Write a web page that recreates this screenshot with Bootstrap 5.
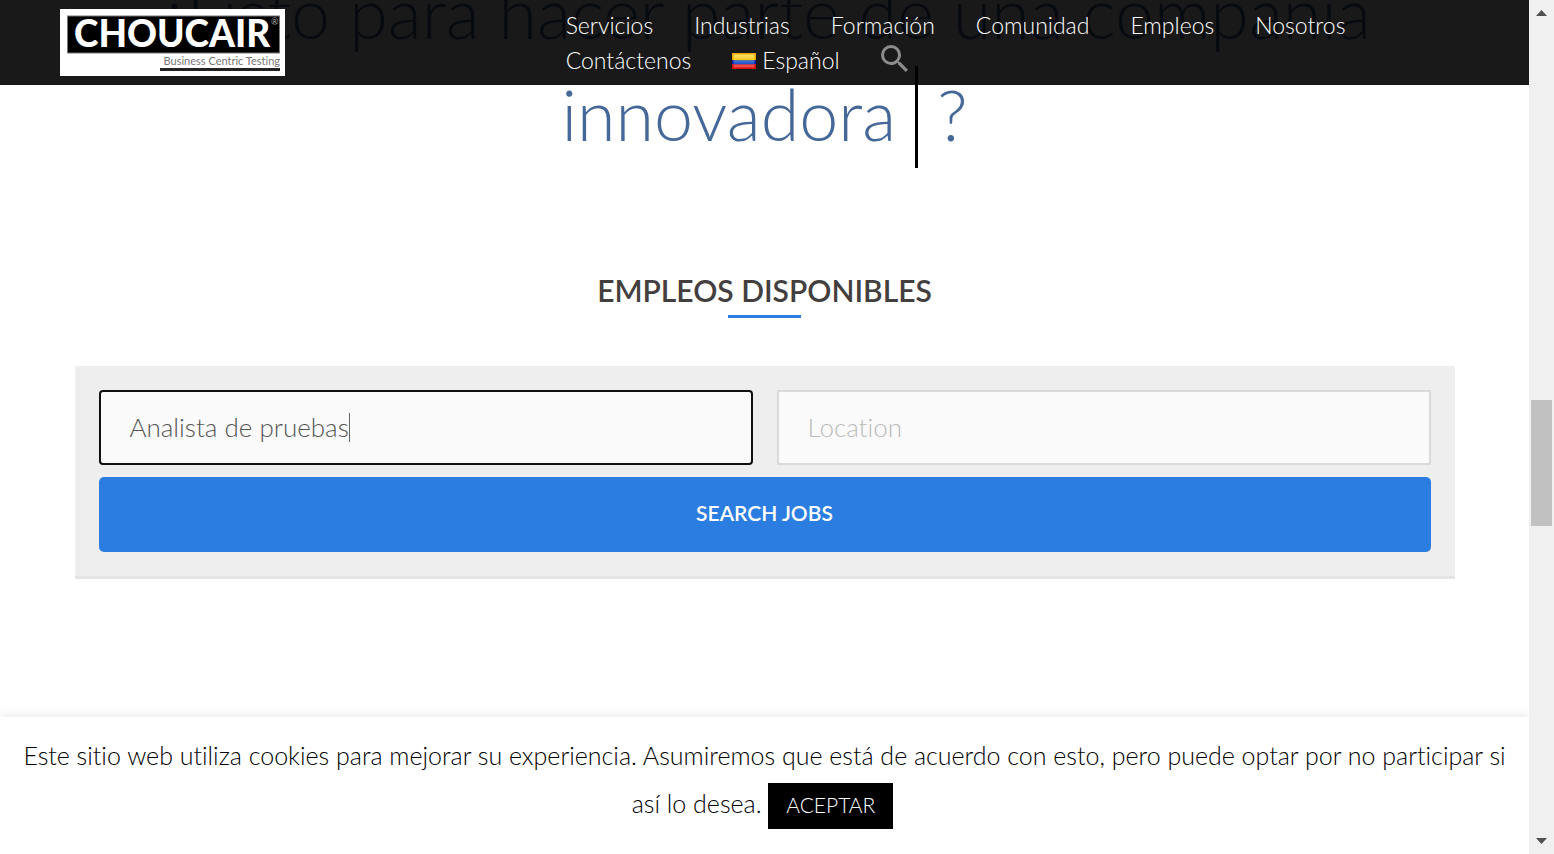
<!DOCTYPE html>
<html lang="es">
<head>
<meta charset="utf-8">
<meta name="viewport" content="width=device-width, initial-scale=1">
<title>Choucair - Empleos</title>
<link href="https://cdn.jsdelivr.net/npm/bootstrap@5.3.0/dist/css/bootstrap.min.css" rel="stylesheet">
<style>
body { font-family: Lato, sans-serif; background: #fff; color: #000; font-variant-ligatures: none; }
input { font-variant-ligatures: none; }
.site-header { background: rgba(0,0,0,.9); z-index: 10; padding: 8px 60px 7px; }
.logo-box { width: 225px; height: 67px; margin-top: 1px; }
.site-menu { font-size: 23px; font-weight: 300; line-height: 35px; padding-left: 36px; column-gap: 41px; }
.site-menu a { color: #fff; text-decoration: none; }
.site-menu .search-toggle { line-height: 0; padding-top: 2px; }
.lang-flag { margin-right: 6px; }
.page-body { max-width: 1380px; }
.hero-title { font-size: 70px; line-height: 102px; font-weight: 300; color: #456899; margin: -39px 0 0; }
.typed-cursor { display: inline-block; width: 3px; height: 102px; background: #000; vertical-align: -27px; }
.section-title { font-size: 30px; line-height: 36px; font-weight: 600; color: #443f3f; margin: 104px 0 0; }
.title-rule { width: 73px; height: 3px; background: #2c7de1; margin-top: 7px; }
.job-search { background: #eee; border-bottom: 3px solid #e4e4e4; padding: 24px; margin-top: 48px; row-gap: 12px; column-gap: 24px; }
.job-field { height: 75px; font-size: 26px; font-weight: 300; border: 2px solid #dadada; border-radius: 0; background: #fafafa; padding: 0 29px 2px; color: #555; }
.job-field::placeholder { color: #bbb; }
.job-field.active-field { border-color: #101010; border-radius: 4px; }
.text-caret { position: absolute; left: 250px; top: 23px; width: 1px; height: 29px; background: #666; }
.job-submit { height: 75px; font-size: 21px; font-weight: 600; color: #fff; background: #2c7de1; border: 0; border-radius: 5px; padding-bottom: 4px; }
.cookie-bar { z-index: 10; background: #fff; font-size: 25px; font-weight: 300; line-height: 48px; padding: 14px 18px 25px; box-shadow: 0 -1px 10px rgba(172,171,171,.3); }
.cookie-accept { height: 46px; width: 125px; font-size: 21px; line-height: 44px; font-weight: 300; color: #fff; background: #000; border: 0; padding: 0 0 2px; vertical-align: top; margin: 4px 4px 0 0; }
.scroll-track { width: 25px; background: #f0f0f0; }
.scroll-thumb { width: 21px; height: 126px; background: #c1c1c1; }
</style>
</head>
<body>
<div class="d-flex vh-100 overflow-hidden">
  <div class="flex-grow-1 position-relative overflow-hidden">
    <header class="site-header position-absolute top-0 start-0 w-100">
      <div class="row g-0">
        <div class="col-4">
          <a href="#" class="d-block logo-box" aria-label="Choucair">
            <svg class="d-block" width="225" height="67" viewBox="0 0 225 67">
              <rect width="225" height="67" fill="#fff"/>
              <rect x="7.500" y="7" width="212" height="37" fill="#000" stroke="#777"/>
              <text x="14" y="38" font-family="Lato" font-weight="900" font-size="37" fill="#fff">CHOUCAIR</text>
              <text x="211" y="16" font-family="Lato" font-size="9" fill="#aaa">®</text>
              <text x="220" y="56" text-anchor="end" font-family="Lato" font-size="11" fill="#777">Business Centric Testing</text>
              <rect x="100" y="59" width="120" height="3" fill="#222"/>
            </svg>
          </a>
        </div>
        <nav class="col-8 site-menu d-flex flex-wrap align-content-start">
          <a href="#">Servicios</a>
          <a href="#">Industrias</a>
          <a href="#">Formación</a>
          <a href="#">Comunidad</a>
          <a href="#">Empleos</a>
          <a href="#">Nosotros</a>
          <a href="#">Contáctenos</a>
          <a href="#" class="d-flex align-items-center">
            <svg class="lang-flag" width="24" height="16" viewBox="0 0 24 16" aria-hidden="true">
              <defs>
                <linearGradient id="fy" x2="0" y2="1"><stop stop-color="#ffe36a"/><stop offset="1" stop-color="#f5c51c"/></linearGradient>
                <linearGradient id="fb" x2="0" y2="1"><stop stop-color="#3d74dc"/><stop offset="1" stop-color="#1a4fc6"/></linearGradient>
              </defs>
              <rect width="24" height="8" fill="#f0a800"/><rect y="7" width="24" height="5" fill="#0a17a8"/><rect y="11" width="24" height="5" fill="#d40c0c"/>
              <rect x="1.500" y="1.500" width="21" height="6" fill="url(#fy)"/><rect x="1.500" y="7.500" width="21" height="4" fill="url(#fb)"/><rect x="1.500" y="11.500" width="21" height="3" fill="#f04a4a"/>
            </svg>Español</a>
          <a href="#" class="search-toggle" aria-label="Buscar">
            <svg width="27" height="27" viewBox="3 3 17.500 17.500" fill="#8c8c8c"><path d="M15.500 14h-.79l-.28-.27A6.471 6.471 0 0 0 16 9.500 6.500 6.500 0 1 0 9.500 16c1.610 0 3.090-.59 4.230-1.570l.27.28v.79l5 4.990L20.490 19l-4.990-5zm-6 0C7.010 14 5 11.990 5 9.500S7.010 5 9.500 5 14 7.010 14 9.500 11.990 14 9.500 14z"/></svg>
          </a>
        </nav>
      </div>
    </header>

    <main class="page-body mx-auto">
      <h1 class="hero-title text-center">¿Listo para hacer parte de una compañía innovadora <span class="typed-cursor"></span> ?</h1>
      <h2 class="section-title text-center">EMPLEOS DISPONIBLES</h2>
      <div class="title-rule mx-auto"></div>
      <form class="job-search d-flex flex-wrap">
        <div class="position-relative flex-fill">
          <input type="text" class="job-field active-field w-100" aria-label="Keywords" value="Analista de pruebas">
          <span class="text-caret"></span>
        </div>
        <div class="flex-fill">
          <input type="text" class="job-field w-100" aria-label="Location" placeholder="Location">
        </div>
        <button type="button" class="job-submit w-100">SEARCH JOBS</button>
      </form>
    </main>

    <div class="cookie-bar position-absolute bottom-0 start-0 w-100 text-center">
      Este sitio web utiliza cookies para mejorar su experiencia. Asumiremos que está de acuerdo con esto, pero puede optar por no participar si así lo desea. <button type="button" class="cookie-accept">ACEPTAR</button>
    </div>
  </div>

  <div class="scroll-track d-flex flex-column align-items-center flex-shrink-0 py-2" aria-hidden="true">
    <svg width="11" height="9" viewBox="0 0 11 9"><path d="M0 8 5.500 2 11 8z" fill="#505050"/></svg>
    <div style="flex: 383 0 0"></div>
    <div class="scroll-thumb"></div>
    <div style="flex: 311 0 0"></div>
    <svg width="11" height="9" viewBox="0 0 11 9"><path d="M0 1 11 1 5.500 7z" fill="#505050"/></svg>
  </div>
</div>
<script src="https://cdn.jsdelivr.net/npm/bootstrap@5.3.0/dist/js/bootstrap.bundle.min.js"></script>
</body>
</html>
